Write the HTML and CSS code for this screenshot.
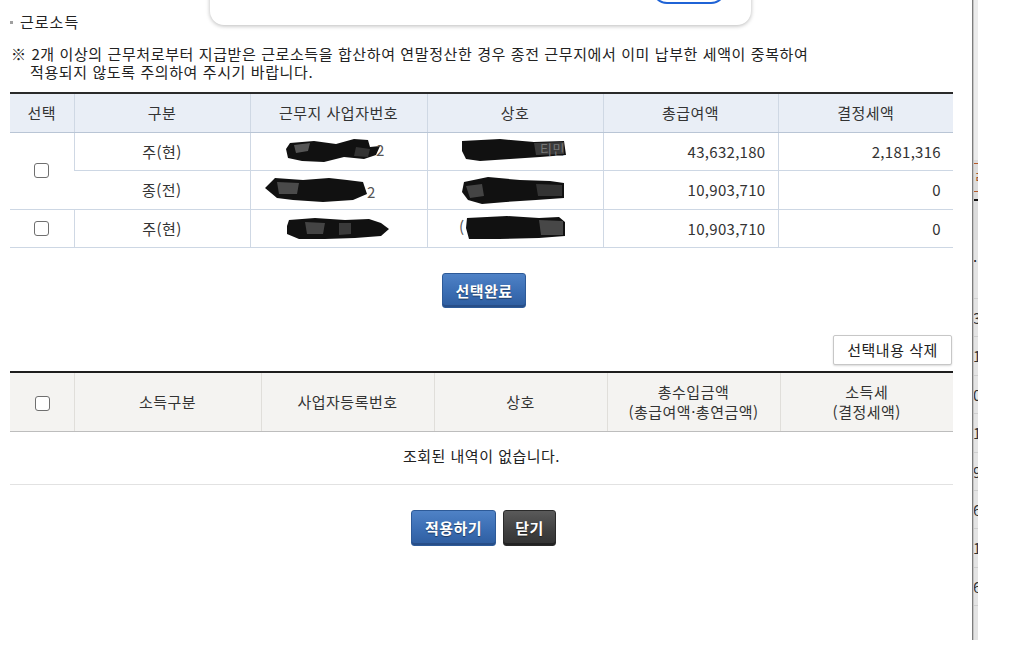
FILE: index.html
```html
<!DOCTYPE html>
<html lang="ko">
<head>
<meta charset="utf-8">
<title>근로소득</title>
<link rel="stylesheet" href="styles.css">
</head>
<body>
<div class="dialog"><span class="pill"></span></div>

<div class="behind">
  <div class="behind-strip">
    <div class="bh-top"></div>
    <div class="bh-mark"><span class="o1"></span><span class="oc">ㄹ</span><span class="o2"></span><span class="k1"></span></div>
    <div class="bh-row first">.(</div>
    <div class="bh-row">3</div>
    <div class="bh-row">1</div>
    <div class="bh-row">0</div>
    <div class="bh-row">1</div>
    <div class="bh-row">9</div>
    <div class="bh-row">6</div>
    <div class="bh-row">1</div>
    <div class="bh-row">6</div>
    <div class="bh-row"></div>
  </div>
</div>

<main class="page">
  <h2 class="title"><span class="bullet"></span>근로소득</h2>
  <p class="note">※ 2개 이상의 근무처로부터 지급받은 근로소득을 합산하여 연말정산한 경우 종전 근무지에서 이미 납부한 세액이 중복하여<br>적용되지 않도록 주의하여 주시기 바랍니다.</p>

  <table class="grid grid-blue">
    <colgroup>
      <col class="c-chk"><col class="c1"><col class="c2"><col class="c3"><col class="c4"><col class="c5">
    </colgroup>
    <thead>
      <tr><th>선택</th><th>구분</th><th>근무지 사업자번호</th><th>상호</th><th>총급여액</th><th>결정세액</th></tr>
    </thead>
    <tbody>
      <tr>
        <td rowspan="2" class="chk-cell"><span class="chk"></span></td>
        <td>주(현)</td>
        <td><svg class="blob" width="110" height="28" viewBox="0 0 110 28"><path d="M6 6 L30 4 L52 7 L70 2 L84 3 L86 10 L96 9 L92 18 L80 22 L60 20 L40 25 L18 24 L4 21 L2 12 Z" fill="#111"/><path d="M10 8 L26 6 L24 14 L12 16 Z" fill="#555"/><path d="M72 10 L86 12 L84 20 L70 19 Z" fill="#333"/><text x="92" y="19" class="ghost">2</text></svg></td>
        <td><svg class="blob" width="110" height="28" viewBox="0 0 110 28"><path d="M2 4 L40 2 L74 5 L104 4 L106 18 L80 20 L50 22 L20 24 L6 22 L2 14 Z" fill="#111"/><path d="M74 6 L104 5 L104 17 L76 18 Z" fill="#3a3a3a"/><text x="80" y="17" class="ghost2">티민</text></svg></td>
        <td class="num">43,632,180</td>
        <td class="num">2,181,316</td>
      </tr>
      <tr>
        <td>종(전)</td>
        <td><svg class="blob blob-l" width="116" height="32" viewBox="0 0 116 32"><path d="M2 14 L12 4 L40 6 L66 4 L84 6 L100 8 L104 20 L90 26 L60 28 L30 26 L14 24 Z" fill="#111"/><path d="M14 8 L36 9 L34 20 L16 20 Z" fill="#4a4a4a"/><text x="104" y="24" class="ghost">2</text></svg></td>
        <td><svg class="blob" width="110" height="32" viewBox="0 0 110 32"><path d="M4 8 L28 3 L60 6 L90 7 L104 9 L104 24 L76 26 L46 28 L22 30 L8 26 L2 18 Z" fill="#111"/><path d="M6 12 L22 10 L24 22 L10 24 Z" fill="#444"/><path d="M76 10 L102 11 L102 22 L78 22 Z" fill="#333"/></svg></td>
        <td class="num">10,903,710</td>
        <td class="num">0</td>
      </tr>
      <tr>
        <td class="chk-cell"><span class="chk"></span></td>
        <td>주(현)</td>
        <td><svg class="blob" width="108" height="28" viewBox="0 0 108 28"><path d="M4 6 L30 4 L60 6 L84 5 L96 9 L104 15 L96 22 L70 24 L40 25 L14 25 L2 20 L2 12 Z" fill="#111"/><path d="M20 8 L40 9 L38 20 L22 20 Z" fill="#444"/><path d="M54 9 L66 9 L66 20 L54 21 Z" fill="#3a3a3a"/></svg></td>
        <td><svg class="blob" width="112" height="28" viewBox="0 0 112 28"><text x="0" y="19" class="ghost">(</text><path d="M8 4 L48 2 L80 4 L100 3 L106 8 L106 22 L80 24 L40 25 L10 25 L7 14 Z" fill="#111"/><path d="M80 6 L104 7 L104 21 L82 21 Z" fill="#474747"/></svg></td>
        <td class="num">10,903,710</td>
        <td class="num">0</td>
      </tr>
    </tbody>
  </table>

  <div class="center-actions">
    <button class="btn btn-blue" type="button">선택완료</button>
  </div>

  <div class="right-actions">
    <button class="btn btn-white" type="button">선택내용 삭제</button>
  </div>

  <table class="grid grid-gray">
    <colgroup>
      <col class="d-chk"><col class="d1"><col class="d2"><col class="d3"><col class="d4"><col class="d5">
    </colgroup>
    <thead>
      <tr>
        <th><span class="chk"></span></th>
        <th>소득구분</th>
        <th>사업자등록번호</th>
        <th>상호</th>
        <th>총수입금액<br>(총급여액·총연금액)</th>
        <th>소득세<br>(결정세액)</th>
      </tr>
    </thead>
    <tbody>
      <tr><td colspan="6" class="empty">조회된 내역이 없습니다.</td></tr>
    </tbody>
  </table>

  <div class="bottom-actions">
    <button class="btn btn-blue" type="button">적용하기</button>
    <button class="btn btn-dark" type="button">닫기</button>
  </div>
</main>
</body>
</html>
```

FILE: styles.css
```css
* { box-sizing: border-box; }

html, body {
  margin: 0;
  padding: 0;
  background: #ffffff;
}

body {
  width: 1025px;
  height: 656px;
  overflow: hidden;
  position: relative;
  font-family: "Noto Sans CJK KR", "Noto Sans", sans-serif;
  color: #222;
  font-size: 15px;
  letter-spacing: 0.5px;
}

/* top dialog overlapping the page */
.dialog {
  position: absolute;
  left: 210px;
  top: -60px;
  width: 541px;
  height: 85px;
  background: #fff;
  border-radius: 14px;
  box-shadow: 0 1px 4px rgba(0, 0, 0, 0.28);
  z-index: 3;
}

.pill {
  position: absolute;
  left: 442px;
  top: 34px;
  width: 74px;
  height: 30px;
  border: 2px solid #1f63d6;
  border-radius: 16px;
}

/* background page visible on the right */
.behind {
  position: absolute;
  left: 972px;
  top: 0;
  width: 53px;
  height: 640px;
  border-left: 1px solid #7d7d7d;
  z-index: 1;
}

.behind-strip {
  width: 5px;
  height: 100%;
  background: #e4e4e4;
  border-left: 1px solid #c4c4c4;
  overflow: hidden;
  font-size: 15px;
  color: #333;
  letter-spacing: 0;
}

.bh-top {
  height: 160px;
  background: #ececec;
}

.bh-mark {
  position: relative;
  height: 80px;
  background: #dcdcdc;
}

.bh-mark .o1,
.bh-mark .o2,
.bh-mark .k1 {
  position: absolute;
  left: 0;
  width: 5px;
  height: 1px;
}

.bh-mark .o1 { top: 3px; background: #b55a2a; }
.bh-mark .o2 { top: 31px; background: #b55a2a; }
.bh-mark .k1 { top: 39px; height: 2px; background: #111; }

.bh-mark .oc {
  position: absolute;
  left: 0;
  top: 6px;
  font-size: 14px;
  line-height: 20px;
  color: #a0502a;
}

.bh-row {
  height: 38.4px;
  line-height: 38.4px;
  border-bottom: 1px solid #cfcfcf;
  white-space: nowrap;
  text-indent: -1px;
}

.bh-row.first {
  height: 59px;
  line-height: 32px;
  color: #222;
}

/* main content */
.page {
  position: relative;
  z-index: 2;
  width: 953px;
  padding-left: 10px;
  padding-top: 13px;
}

.title {
  margin: 0;
  display: flex;
  align-items: center;
  height: 18px;
  line-height: 18px;
  font-size: 15px;
  font-weight: normal;
  color: #222;
  letter-spacing: 1px;
}

.bullet {
  width: 3px;
  height: 3px;
  background: #a0a0a0;
  margin: 0 7px 0 0;
}

.note {
  margin: 14px 0 0 1px;
  padding-left: 19px;
  text-indent: -19px;
  font-size: 15px;
  line-height: 18px;
  color: #222;
  letter-spacing: 0.6px;
}

/* tables */
.grid {
  width: 943px;
  border-collapse: collapse;
  table-layout: fixed;
  font-size: 15px;
  color: #333;
}

.grid th,
.grid td {
  padding: 0;
  text-align: center;
  font-weight: normal;
  vertical-align: middle;
}

.grid-blue {
  margin-top: 11px;
  border-top: 2px solid #2a2a2a;
}

.grid-blue .c-chk { width: 64px; }
.grid-blue .c1 { width: 176px; }
.grid-blue .c2 { width: 177px; }
.grid-blue .c3 { width: 176px; }
.grid-blue .c4 { width: 175px; }
.grid-blue .c5 { width: 175px; }

.grid-blue th {
  height: 39px;
  background: #e9eef6;
  border-left: 1px solid #cfd8e4;
  border-bottom: 1px solid #b9c5d5;
  color: #333;
}

.grid-blue td {
  height: 38.5px;
  border-left: 1px solid #cfd8e4;
  border-bottom: 1px solid #cdd7e4;
}

.grid th:first-child,
.grid td:first-child {
  border-left: none;
}

.grid-blue td.num {
  text-align: right;
  padding-right: 12px;
  letter-spacing: 0.3px;
}

.chk-cell {
  line-height: 0;
}

.chk {
  display: inline-block;
  width: 15px;
  height: 15px;
  border: 1px solid #6f6f6f;
  border-radius: 3px;
  background: #fff;
  vertical-align: middle;
}

.blob {
  display: inline-block;
  vertical-align: middle;
}

.blob-l {
  margin-left: -36px;
}

.ghost {
  font-family: "Noto Sans CJK KR", "Noto Sans", sans-serif;
  font-size: 15px;
  fill: #555;
}

.ghost2 {
  font-family: "Noto Sans CJK KR", "Noto Sans", sans-serif;
  font-size: 13px;
  fill: #777;
}

/* buttons */
.center-actions {
  display: flex;
  justify-content: center;
  margin-top: 25px;
  padding-left: 5px;
}

.right-actions {
  display: flex;
  justify-content: flex-end;
  margin-top: 27px;
  padding-right: 1px;
}

.bottom-actions {
  display: flex;
  justify-content: center;
  gap: 7px;
  margin-top: 25px;
  padding-left: 4px;
}

.btn {
  font-family: "Noto Sans CJK KR", "Noto Sans", sans-serif;
  font-size: 15px;
  line-height: 20px;
  letter-spacing: 0.5px;
  cursor: pointer;
  margin: 0;
}

.btn-blue {
  height: 35px;
  padding: 0 13px;
  color: #fff;
  font-weight: bold;
  background: linear-gradient(#4f82c6, #3a6db3 55%, #2e5d9f);
  border: 1px solid #2d5a98;
  border-radius: 3px;
  box-shadow: inset 0 -2px 0 #274e88;
  text-shadow: 0 1px 1px rgba(0, 0, 0, 0.45);
}

.center-actions .btn-blue {
  width: 84px;
  padding: 0;
}

.bottom-actions .btn-blue {
  width: 85px;
  height: 36px;
  padding: 0;
}

.btn-dark {
  width: 53px;
  height: 36px;
  padding: 0;
  color: #fff;
  font-weight: bold;
  background: linear-gradient(#5a5a5a, #3f3f3f 60%, #333);
  border: 1px solid #2a2a2a;
  border-radius: 3px;
  box-shadow: inset 0 -2px 0 #222;
  text-shadow: 0 1px 1px rgba(0, 0, 0, 0.5);
}

.btn-white {
  height: 30px;
  width: 119px;
  padding: 0;
  color: #222;
  background: #fff;
  border: 1px solid #c7c7c7;
  border-radius: 2px;
  box-shadow: 0 1px 2px rgba(0, 0, 0, 0.15);
}

/* second table */
.grid-gray {
  margin-top: 6px;
  border-top: 2px solid #1e1e1e;
}

.grid-gray .d-chk { width: 64px; }
.grid-gray .d1 { width: 187px; }
.grid-gray .d2 { width: 173px; }
.grid-gray .d3 { width: 173px; }
.grid-gray .d4 { width: 173px; }
.grid-gray .d5 { width: 173px; }

.grid-gray th {
  height: 59px;
  line-height: 20px;
  background: #f4f3f1;
  border-left: 1px solid #e0deda;
  border-bottom: 1px solid #bdbdbd;
  color: #333;
}

.grid-gray th .chk {
  margin-left: 1px;
}

.grid-gray td.empty {
  height: 53px;
  border-bottom: 1px solid #e2e2e2;
  color: #222;
  padding-bottom: 5px;
}
```
